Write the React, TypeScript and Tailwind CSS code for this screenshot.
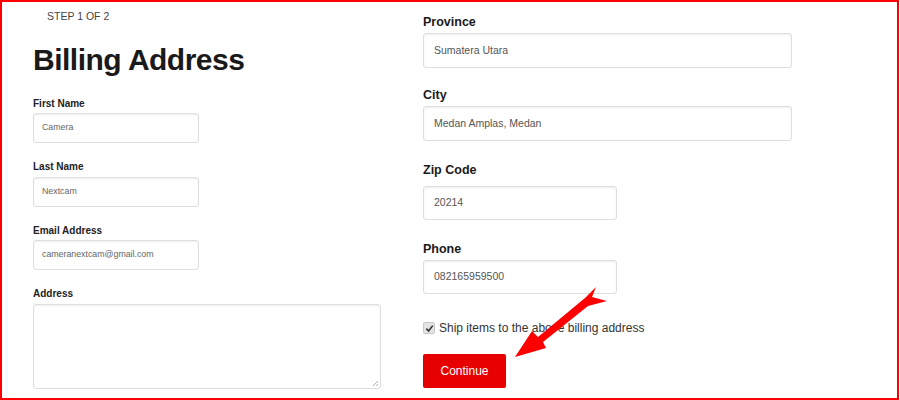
import React from "react";

const font = { fontFamily: '"Liberation Sans", Arial, sans-serif' };

interface IField {
  label: string;
  value: string;
  top: string;
  gap: string;
  width: string;
  height: string;
}

const leftFields: IField[] = [
  { label: "First Name", value: "Camera", top: "mt-[24px]", gap: "mt-[4px]", width: "w-[166px]", height: "h-[30px]" },
  { label: "Last Name", value: "Nextcam", top: "mt-[19px]", gap: "mt-[5px]", width: "w-[166px]", height: "h-[30px]" },
  { label: "Email Address", value: "cameranextcam@gmail.com", top: "mt-[19px]", gap: "mt-[4px]", width: "w-[166px]", height: "h-[30px]" },
];

const rightFields: IField[] = [
  { label: "Province", value: "Sumatera Utara", top: "mt-[14px]", gap: "mt-[4px]", width: "w-[369px]", height: "h-[35px]" },
  { label: "City", value: "Medan Amplas, Medan", top: "mt-[21px]", gap: "mt-[4px]", width: "w-[369px]", height: "h-[35px]" },
  { label: "Zip Code", value: "20214", top: "mt-[23px]", gap: "mt-[9px]", width: "w-[194px]", height: "h-[34px]" },
  { label: "Phone", value: "082165959500", top: "mt-[23px]", gap: "mt-[4px]", width: "w-[194px]", height: "h-[34px]" },
];

const SmallField = ({ field }: { field: IField }) => (
  <div className={field.top}>
    <p className="text-[10px] leading-[10px] font-bold text-[#222]">{field.label}</p>
    <div
      className={`${field.gap} ${field.width} ${field.height} flex items-center pl-[8px] border border-[#dedede] rounded-[3px] shadow-[inset_0_1px_2px_rgba(0,0,0,0.07)] text-[8.8px] text-[#666]`}
    >
      {field.value}
    </div>
  </div>
);

const BigField = ({ field }: { field: IField }) => (
  <div className={field.top}>
    <p className="text-[12.5px] leading-[13px] font-bold text-[#1a1a1a]">{field.label}</p>
    <div
      className={`${field.gap} ${field.width} ${field.height} flex items-center pl-[10px] border border-[#dedede] rounded-[3px] shadow-[inset_0_1px_2px_rgba(0,0,0,0.07)] text-[10.5px] text-[#555]`}
    >
      {field.value}
    </div>
  </div>
);

const App = () => {
  return (
    <div
      style={font}
      className="relative w-[899px] h-[400px] border-2 border-[#ff0000] bg-white flex overflow-hidden"
    >
      {/* Left column */}
      <div className="w-[421px] pl-[31px] shrink-0">
        <p className="mt-[9px] ml-[14px] text-[10.5px] leading-[11px] text-[#444]">STEP 1 OF 2</p>
        <h1 className="mt-[23px] text-[30px] leading-[30px] font-bold tracking-[-0.5px] text-[#1a1a1a]">
          Billing Address
        </h1>
        {leftFields.map((f) => (
          <SmallField key={f.label} field={f} />
        ))}
        <div className="mt-[19px]">
          <p className="text-[10px] leading-[10px] font-bold text-[#222]">Address</p>
          <div className="relative mt-[5px] w-[348px] h-[85px] border border-[#dedede] rounded-[3px] shadow-[inset_0_1px_2px_rgba(0,0,0,0.07)]">
            <svg className="absolute right-[1px] bottom-[1px]" width="7" height="7" viewBox="0 0 7 7">
              <path d="M6 1 L1 6 M6 4 L4 6" stroke="#999" strokeWidth="0.8" />
            </svg>
          </div>
        </div>
      </div>

      {/* Right column */}
      <div className="flex-1">
        {rightFields.map((f) => (
          <BigField key={f.label} field={f} />
        ))}
        <div className="mt-[28px] flex items-center">
          <span className="w-[12px] h-[12px] rounded-[2px] bg-[#e4e4e4] border border-[#c8c8c8] flex items-center justify-center">
            <svg width="9" height="9" viewBox="0 0 10 10">
              <path d="M1.5 5.2 L4 7.8 L8.6 1.8" fill="none" stroke="#333" strokeWidth="1.8" />
            </svg>
          </span>
          <span className="ml-[4px] text-[12px] leading-[12px] text-[#333]">
            Ship items to the above billing address
          </span>
        </div>
        <button className="mt-[20px] w-[83px] h-[34px] bg-[#e60000] rounded-[2px] text-white text-[12px]">
          Continue
        </button>
      </div>

      {/* Annotation arrow */}
      <svg className="absolute left-[-2px] top-[-2px] pointer-events-none" width="900" height="400">
        <polygon
          points="515,357 532,331 538,337 585,298 596,287 592,297 607,301 588,306 543,342 546,348"
          fill="#ff0000"
        />
      </svg>
    </div>
  );
};

export default App;
